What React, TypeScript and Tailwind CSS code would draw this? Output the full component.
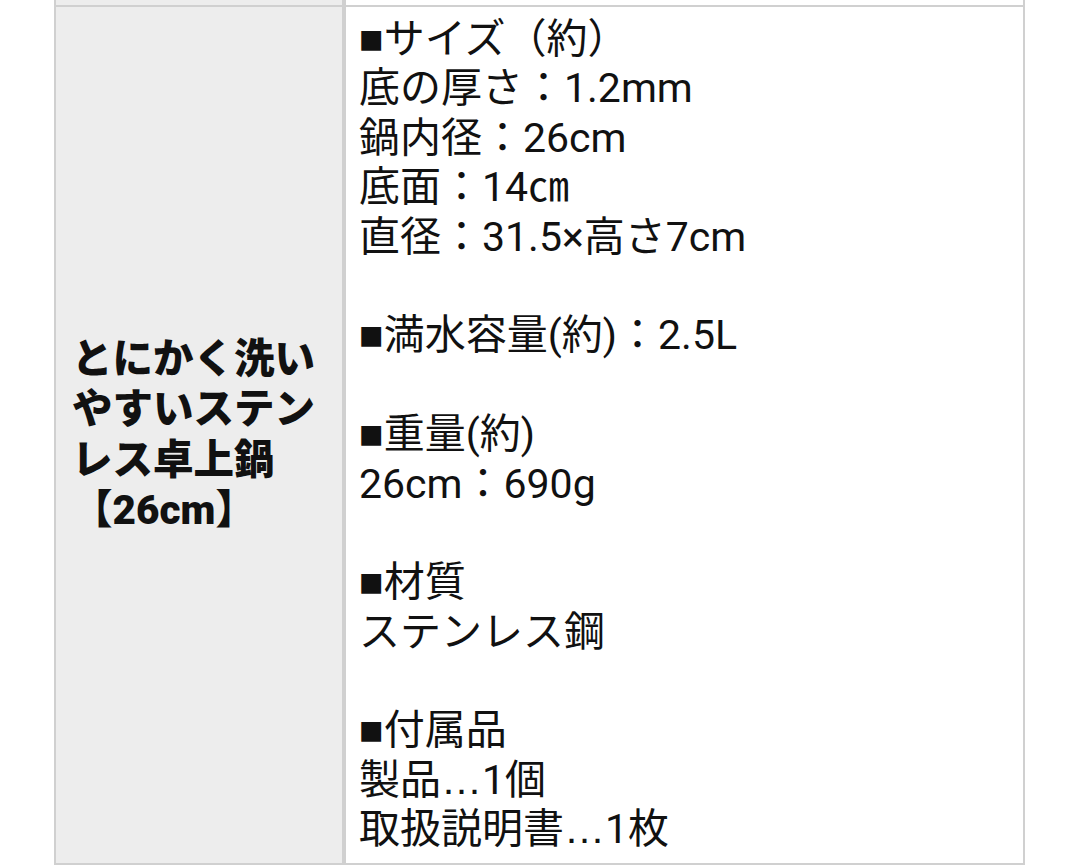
const lines: string[] = [
  "■サイズ（約）",
  "底の厚さ：1.2mm",
  "鍋内径：26cm",
  "底面：14㎝",
  "直径：31.5×高さ7cm",
  "",
  "■満水容量(約)：2.5L",
  "",
  "■重量(約)",
  "26cm：690g",
  "",
  "■材質",
  "ステンレス鋼",
  "",
  "■付属品",
  "製品…1個",
  "取扱説明書…1枚",
];

function SpecLine({ text }: { text: string }) {
  if (text === "") return <div className="h-[49.4px]" />;
  if (text.startsWith("■")) {
    return (
      <div className="h-[49.4px] whitespace-nowrap">
        <span className="font-['Liberation_Sans',sans-serif]">■</span>
        {text.slice(1)}
      </div>
    );
  }
  if (text.includes("…")) {
    const [a, b] = text.split("…");
    return (
      <div className="h-[49.4px] whitespace-nowrap">
        {a}
        <span className="font-['Liberation_Sans',sans-serif]">…</span>
        {b}
      </div>
    );
  }
  return <div className="h-[49.4px] whitespace-nowrap">{text}</div>;
}

export default function App() {
  return (
    <div className="h-[867px] w-[1080px] overflow-hidden bg-white font-['Roboto','Noto_Sans_CJK_JP',sans-serif] text-[#111]">
      <div className="ml-[54px] w-[971px] border-x-2 border-b-2 border-[#d0d0d0]">
        {/* tail of the row above */}
        <div className="flex h-[5px]">
          <div className="w-[288px] border-r-2 border-[#d0d0d0] bg-[#ededed]" />
          <div className="flex-1 border-l-2 border-[#d0d0d0]" />
        </div>

        <div className="flex border-t-2 border-[#d0d0d0]">
          {/* header cell */}
          <div className="flex w-[288px] items-center border-r-2 border-[#d0d0d0] bg-[#ededed] pl-[16px] pr-[8px]">
            <p className="text-[40.5px] font-black leading-[50.5px]">
              とにかく洗い
              <br />
              やすいステン
              <br />
              レス卓上鍋
              <br />
              【26cm】
            </p>
          </div>

          {/* value cell */}
          <div className="flex-1 border-l-2 border-[#d0d0d0] px-[13px] py-[8px] text-[41px] leading-[49.4px]">
            {lines.map((t, i) => (
              <SpecLine key={i} text={t} />
            ))}
          </div>
        </div>
      </div>
    </div>
  );
}
